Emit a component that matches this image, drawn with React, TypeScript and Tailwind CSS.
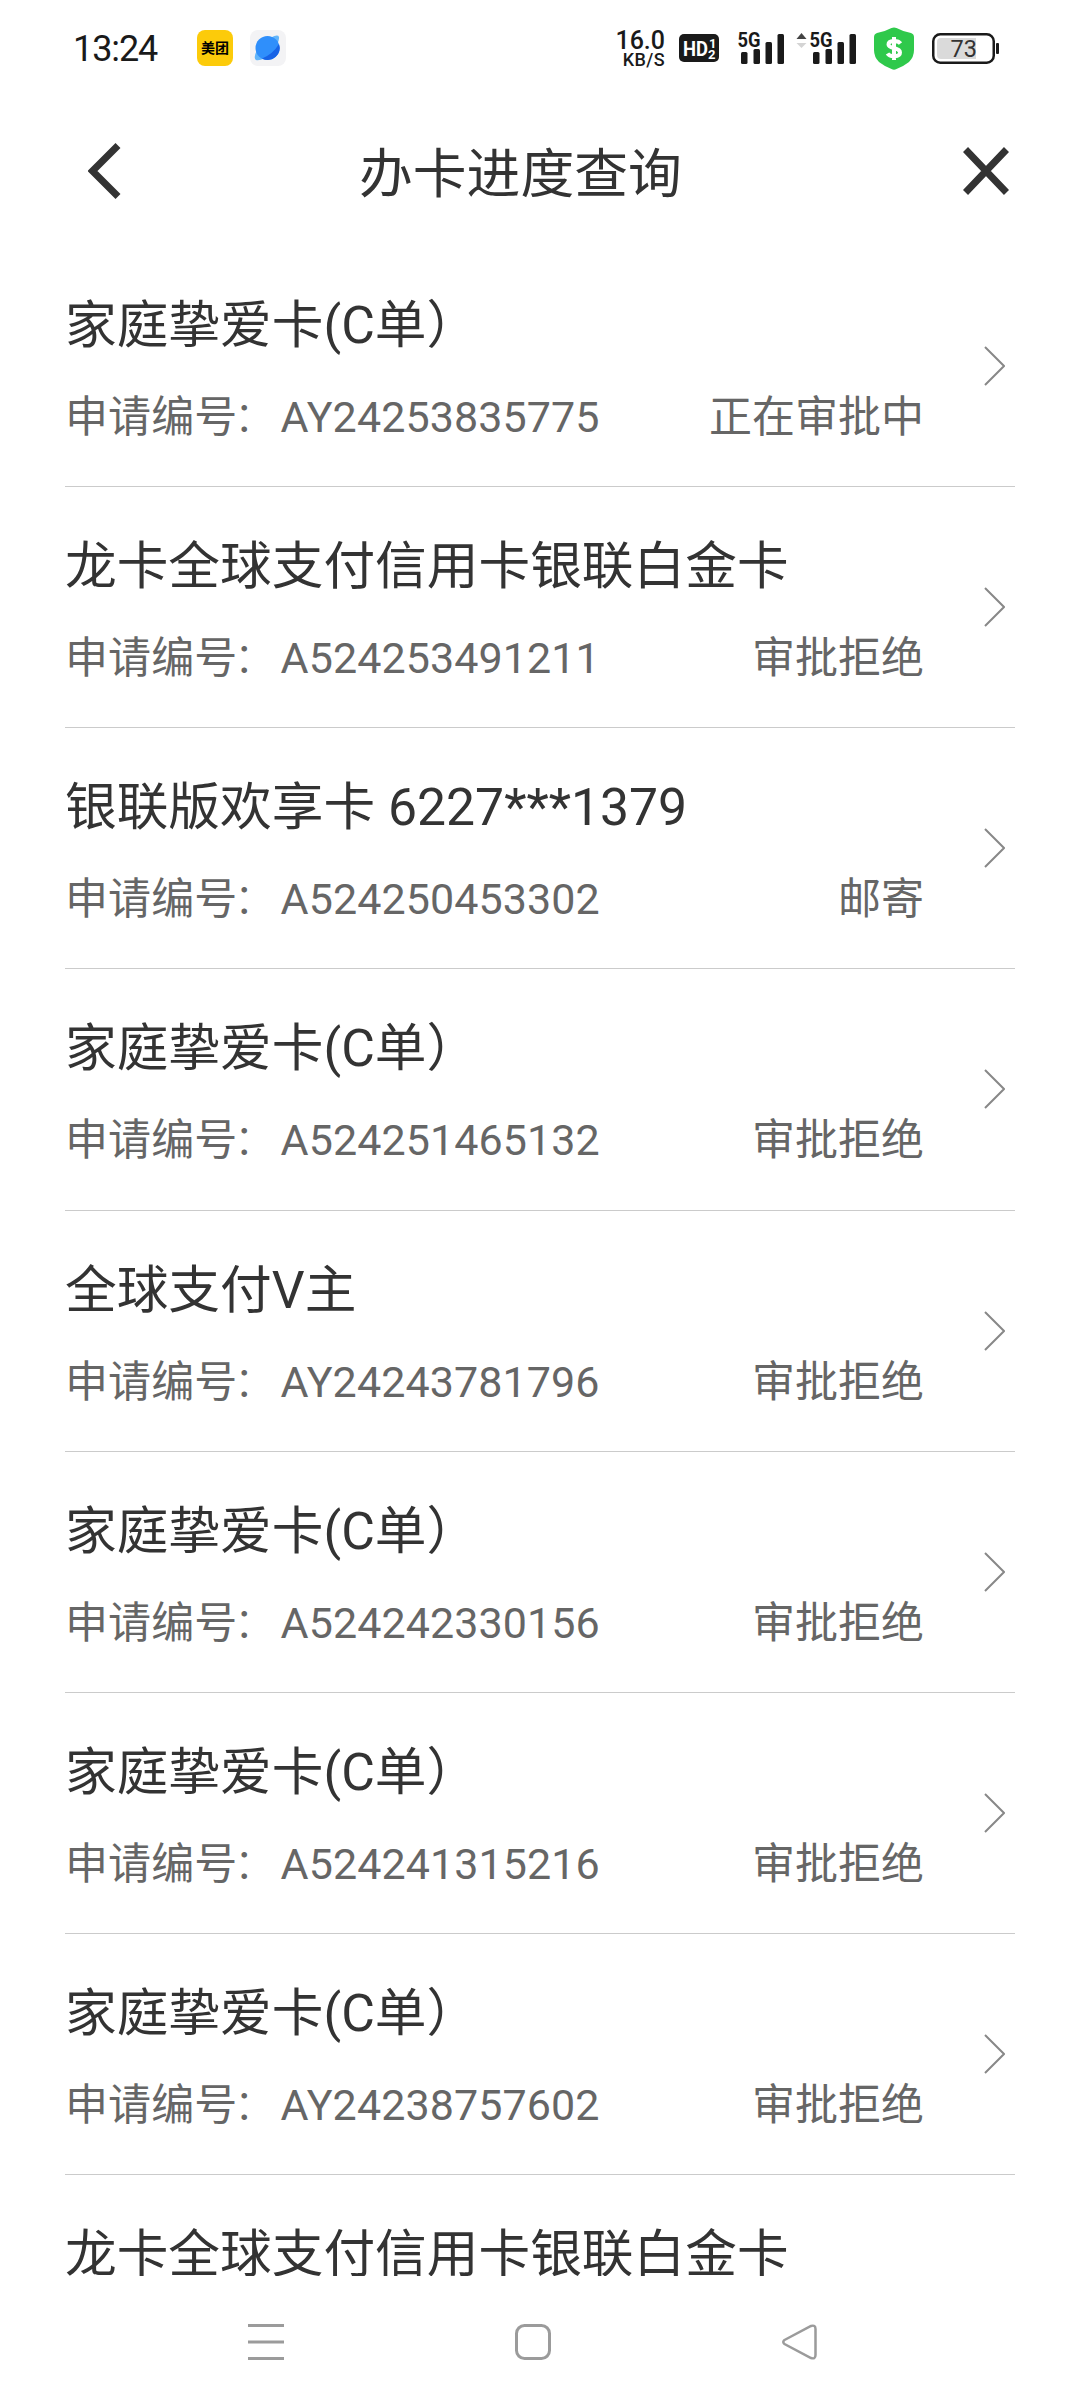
import React from 'react';

const records = [
  { title: '家庭挚爱卡(C单）', no: 'AY24253835775', status: '正在审批中' },
  { title: '龙卡全球支付信用卡银联白金卡', no: 'A524253491211', status: '审批拒绝' },
  { title: '银联版欢享卡 6227***1379', no: 'A524250453302', status: '邮寄' },
  { title: '家庭挚爱卡(C单）', no: 'A524251465132', status: '审批拒绝' },
  { title: '全球支付V主', no: 'AY24243781796', status: '审批拒绝' },
  { title: '家庭挚爱卡(C单）', no: 'A524242330156', status: '审批拒绝' },
  { title: '家庭挚爱卡(C单）', no: 'A524241315216', status: '审批拒绝' },
  { title: '家庭挚爱卡(C单）', no: 'AY24238757602', status: '审批拒绝' },
];

const Signal = () => (
  <svg className="overflow-visible" width="47" height="34" viewBox="0 0 47 34" fill="#1a1a1a">
    <text x="-0.5" y="16" fontSize="20.5" fontWeight="700" textLength="23" lengthAdjust="spacingAndGlyphs">5G</text>
    <rect x="3" y="21" width="6.5" height="12" rx="1.5" />
    <rect x="15.5" y="18" width="6.5" height="15" rx="1.5" />
    <rect x="27.5" y="11" width="6.5" height="22" rx="1.5" />
    <rect x="39.5" y="3" width="6.5" height="30" rx="1.5" />
  </svg>
);

const StatusBar = () => (
  <div className="flex h-24 items-center pl-[73px] pr-[81px] text-[#1a1a1a]">
    <span className="w-[124px] pt-[2px] text-[36px] leading-none tracking-[-1.1px]">13:24</span>
    <div className="flex size-9 items-center justify-center rounded-[8px] bg-[#fccb0a] text-[14px] leading-none font-bold text-black">
      美团
    </div>
    <svg className="ml-[17px]" width="36" height="36" viewBox="0 0 36 36">
      <rect width="36" height="36" rx="8" fill="#f3f3f5" />
      <path d="M21 7.500Q28 4 29 7Q29.500 10 27 14ZM7 20Q3 28 6 30Q9 31 15 28Z" fill="#62b5fa" />
      <circle cx="17.500" cy="18" r="12" fill="#2f8ffb" />
      <path d="M29 14A12 12 0 0 1 12 28.500Q23 24 29 14Z" fill="#1763e6" />
    </svg>
    <div className="flex-1" />
    <div className="mr-[14px] flex flex-col items-end pt-[3px]">
      <span className="text-[25px] leading-[21px] font-medium">16.0</span>
      <span className="text-[18px] leading-[18px] font-medium tracking-[0.4px]">KB/S</span>
    </div>
    <svg className="overflow-visible" width="40" height="28" viewBox="0 0 40 28">
      <rect width="40" height="28" rx="5" fill="#1a1a1a" />
      <g fill="#fff" fontWeight="700">
        <text x="4" y="21.500" fontSize="21" textLength="25" lengthAdjust="spacingAndGlyphs">HD</text>
        <text x="30" y="13.500" fontSize="13">1</text>
        <text x="29" y="25" fontSize="13">2</text>
      </g>
    </svg>
    <div className="ml-[19px] flex"><Signal /></div>
    <svg className="ml-[11px]" width="11" height="34" viewBox="0 0 11 34">
      <path d="M0.500 8L5.500 2L10.500 8Z" fill="#444" />
      <path d="M0.500 12L5.500 17L10.500 12Z" fill="#d4d4d4" />
    </svg>
    <div className="ml-[3px] flex"><Signal /></div>
    <svg className="ml-[17px]" width="40" height="43" viewBox="0 0 40 43">
      <path d="M17.500 1Q20 0 22.500 1Q30 5 37 6Q40 7 40 10V23Q40 30 35 35Q30 39 22.500 42Q20 43.500 17.500 42Q10 39 5 35Q0 30 0 23V10Q0 7 3 6Q10 5 17.500 1Z" fill="#2fc94b" />
      <path d="M26.500 16.500C24 13 14.500 13 14.500 17.500C14.500 22 26 20 26 25.500C26 30 16 30.500 13.500 26.500M20 10V33" fill="none" stroke="#fff" strokeWidth="4" />
    </svg>
    <svg className="ml-[18px]" width="67" height="31" viewBox="0 0 67 31">
      <rect x="1.250" y="1.250" width="60.500" height="28.500" rx="7" fill="#fff" stroke="#1a1a1a" strokeWidth="2.500" />
      <path d="M9 5H44V26H9Q5 26 5 22V9Q5 5 9 5Z" fill="#dadada" />
      <rect x="64" y="10" width="3" height="11" rx="1" fill="#1a1a1a" />
      <text x="18.500" y="24" fontSize="23.500" fill="#333">73</text>
    </svg>
  </div>
);

const Header = () => (
  <header className="flex h-[150px] items-center pr-[71px] pl-[88px] text-[#333]">
    <svg width="34" height="56" viewBox="0 0 34 56" fill="none" stroke="#333" strokeWidth="7">
      <path d="M30 2.500L4.500 28L30 53.500" />
    </svg>
    <h1 className="ml-[237px] flex-1 pt-[8px] text-[53.8px] leading-[78px]">办卡进度查询</h1>
    <svg width="46" height="48" viewBox="0 0 46 48" fill="none" stroke="#333" strokeWidth="7">
      <path d="M2.500 2.500L43.500 45.500M43.500 2.500L2.500 45.500" />
    </svg>
  </header>
);

const NavBar = () => (
  <nav className="flex h-[132px] items-center justify-between pr-[262px] pl-[248px]">
    <svg width="36" height="36" viewBox="0 0 36 36" stroke="#9b9b9b" strokeWidth="3">
      <path d="M0 1.500H36M0 18H36M0 34.500H36" />
    </svg>
    <svg width="36" height="36" viewBox="0 0 36 36" fill="none" stroke="#9b9b9b" strokeWidth="3">
      <rect x="1.500" y="1.500" width="33" height="33" rx="8" />
    </svg>
    <svg width="36" height="36" viewBox="0 0 36 36" fill="none" stroke="#9b9b9b" strokeWidth="2.500">
      <path d="M2.500 16L29 2Q33.500 0.500 33.500 5V31Q33.500 35.500 29 34L2.500 20Q0 18 2.500 16Z" />
    </svg>
  </nav>
);

export default function App() {
  return (
    <div className="flex h-[2408px] w-[1080px] flex-col overflow-hidden bg-white font-['Roboto','Noto_Sans_CJK_SC',sans-serif]">
      <StatusBar />
      <Header />
      <main className="min-h-0 flex-1 overflow-hidden px-[65px]">
        {records.map((item, i) => (
          <div key={i} className="flex h-[241.14px] items-center border-b border-[#cbcbcb]">
            <div className="flex-1 pt-[11px]">
              <div className="text-[51.7px] leading-[76px] text-[#333]">{item.title}</div>
              <div className="mt-[15px] flex justify-between pr-[49px] text-[43px] leading-[76px] text-[#666]">
                <span className="tracking-[0.1px]">
                  申请编号<span className="-ml-1 mr-1 font-light">：</span>{item.no}
                </span>
                <span>{item.status}</span>
              </div>
            </div>
            {/* chevron */}
            <svg className="mr-[10px]" width="32" height="40" viewBox="0 0 32 40" fill="none" stroke="#888" strokeWidth="2">
              <path d="M12 1L31 20L12 39" />
            </svg>
          </div>
        ))}
        {/* next record, only its title is in view */}
        <div className="pt-[42px] text-[51.7px] leading-[76px] text-[#333]">龙卡全球支付信用卡银联白金卡</div>
      </main>
      <NavBar />
    </div>
  );
}
